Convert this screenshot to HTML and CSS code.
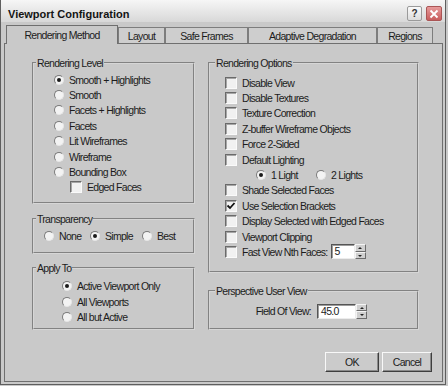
FILE: index.html
```html
<!DOCTYPE html>
<html>
<head>
<meta charset="utf-8">
<title>Viewport Configuration</title>
<link rel="stylesheet" href="styles.css">
</head>
<body>
<div class="window">
  <div class="titlebar">
    <span class="title">Viewport Configuration</span>
    <div class="caption-btns">
      <span class="cbtn help">?</span>
      <span class="cbtn close"><svg width="10" height="10" viewBox="0 0 10 10"><path d="M1.5 1.5L8.5 8.5M8.5 1.5L1.5 8.5" stroke="#fff" stroke-width="1.8" fill="none"/></svg></span>
    </div>
  </div>
  <div class="client">
    <div class="tabs">
      <div class="tab active w1">Rendering Method</div>
      <div class="tab w2">Layout</div>
      <div class="tab w3">Safe Frames</div>
      <div class="tab w4">Adaptive Degradation</div>
      <div class="tab w5">Regions</div>
    </div>
    <div class="panel">
      <div class="columns">
        <div class="col col-left">
          <fieldset class="group">
            <legend>Rendering Level</legend>
            <div class="gbody b-level">
              <div class="row"><span class="radio on"></span><span>Smooth + Highlights</span></div>
              <div class="row"><span class="radio"></span><span>Smooth</span></div>
              <div class="row"><span class="radio"></span><span>Facets + Highlights</span></div>
              <div class="row"><span class="radio"></span><span>Facets</span></div>
              <div class="row"><span class="radio"></span><span>Lit Wireframes</span></div>
              <div class="row"><span class="radio"></span><span>Wireframe</span></div>
              <div class="row"><span class="radio"></span><span>Bounding Box</span></div>
              <div class="row sub"><span class="check"></span><span>Edged Faces</span></div>
            </div>
          </fieldset>
          <fieldset class="group g-trans">
            <legend>Transparency</legend>
            <div class="gbody b-trans">
              <div class="opts opts-trans">
                <div class="row"><span class="radio"></span><span>None</span></div>
                <div class="row"><span class="radio on"></span><span>Simple</span></div>
                <div class="row"><span class="radio"></span><span>Best</span></div>
              </div>
            </div>
          </fieldset>
          <fieldset class="group g-apply">
            <legend>Apply To</legend>
            <div class="gbody b-apply">
              <div class="row"><span class="radio on"></span><span>Active Viewport Only</span></div>
              <div class="row"><span class="radio"></span><span>All Viewports</span></div>
              <div class="row"><span class="radio"></span><span>All but Active</span></div>
            </div>
          </fieldset>
        </div>
        <div class="col col-right">
          <fieldset class="group g-right">
            <legend>Rendering Options</legend>
            <div class="gbody b-opts">
              <div class="row"><span class="check"></span><span>Disable View</span></div>
              <div class="row"><span class="check"></span><span>Disable Textures</span></div>
              <div class="row"><span class="check"></span><span>Texture Correction</span></div>
              <div class="row"><span class="check"></span><span>Z-buffer Wireframe Objects</span></div>
              <div class="row"><span class="check"></span><span>Force 2-Sided</span></div>
              <div class="row"><span class="check"></span><span>Default Lighting</span></div>
              <div class="opts opts-light">
                <div class="row"><span class="radio on"></span><span>1 Light</span></div>
                <div class="row"><span class="radio"></span><span>2 Lights</span></div>
              </div>
              <div class="row"><span class="check"></span><span>Shade Selected Faces</span></div>
              <div class="row"><span class="check on"><svg width="10" height="10" viewBox="0 0 10 10"><path d="M1.5 4.5L4 7L8.5 2" stroke="#111" stroke-width="1.8" fill="none"/></svg></span><span>Use Selection Brackets</span></div>
              <div class="row"><span class="check"></span><span>Display Selected with Edged Faces</span></div>
              <div class="row"><span class="check"></span><span>Viewport Clipping</span></div>
              <div class="row"><span class="check"></span><span>Fast View Nth Faces:</span>
                <span class="spin spin-small"><span class="spin-input">5</span><span class="spin-arrows"><span class="arr"><i class="up"></i></span><span class="arr"><i class="down"></i></span></span></span>
              </div>
            </div>
          </fieldset>
          <fieldset class="group g-right g-persp">
            <legend>Perspective User View</legend>
            <div class="gbody b-persp">
              <div class="row fov"><span>Field Of View:</span>
                <span class="spin spin-wide"><span class="spin-input">45.0</span><span class="spin-arrows"><span class="arr"><i class="up"></i></span><span class="arr"><i class="down"></i></span></span></span>
              </div>
            </div>
          </fieldset>
        </div>
      </div>
      <div class="buttons">
        <span class="btn btn-ok">OK</span>
        <span class="btn btn-cancel">Cancel</span>
      </div>
    </div>
  </div>
</div>
</body>
</html>
```
FILE: styles.css
```css
* { box-sizing: border-box; }
body {
  margin: 0;
  background: #c9c9c9;
  font-family: "Liberation Sans", Arial, sans-serif;
  font-size: 10.5px;
  letter-spacing: -0.7px;
  color: #1c1c1c;
}
.window {
  width: 446px;
  height: 385px;
  border: 1px solid #5e5e5e;
  border-top: 0;
  display: flex;
  flex-direction: column;
  background: #c9c9c9;
}
.titlebar {
  height: 22px;
  flex: none;
  display: flex;
  align-items: center;
  justify-content: space-between;
  padding: 5px 3px 0 7px;
  background: linear-gradient(#f6f6f6, #d8d8d8);
}
.title {
  font-weight: bold;
  font-size: 11px;
  letter-spacing: 0;
  color: #141414;
}
.caption-btns { display: flex; gap: 4px; }
.cbtn {
  height: 15px;
  display: flex;
  align-items: center;
  justify-content: center;
  border-radius: 2px;
}
.help {
  width: 15px;
  background: linear-gradient(#fafafa, #dcdcdc);
  border: 1px solid #9a9a9a;
  font-weight: bold;
  font-size: 10px;
  letter-spacing: 0;
  color: #333;
}
.close {
  width: 16px;
  background: linear-gradient(#e79a9a, #c85c5c);
  border: 1px solid #a55;
}
.client {
  flex: 1;
  display: flex;
  flex-direction: column;
  padding: 0 2px 2px 3px;
}
.tabs {
  height: 21px;
  flex: none;
  display: flex;
  align-items: flex-end;
  padding-left: 2px;
}
.tab {
  height: 16px;
  flex: none;
  border: 1px solid #7d7d7d;
  border-bottom: 0;
  display: flex;
  align-items: center;
  justify-content: center;
  background: #cecece;
  white-space: nowrap;
}
.tab.active {
  height: 19px;
  margin-bottom: -1px;
  position: relative;
  z-index: 1;
  background: #c9c9c9;
  border-color: #6f6f6f;
}
.w1 { width: 112px; }
.w2 { width: 47px; }
.w3 { width: 83px; }
.w4 { width: 129px; }
.w5 { width: 56px; }
.panel {
  flex: 1;
  border: 1px solid #6f6f6f;
  display: flex;
  flex-direction: column;
  padding: 13px 10px 9px 27px;
}
.columns { display: flex; gap: 13px; }
.col { display: flex; flex-direction: column; }
.col-left { width: 163px; }
.col-right { width: 211px; }
.group {
  margin: 0;
  padding: 0;
  min-width: 0;
  border: 2px groove #d6d6d6;
}
.group legend {
  margin-left: 2px;
  padding: 0 1px;
  line-height: 12px;
  height: 12px;
}
.g-right legend { margin-left: 5px; }
.g-trans { margin-top: 9px; }
.g-apply { margin-top: 8px; }
.g-persp { margin-top: 12px; }
.b-level { padding: 3px 0 7px 20px; }
.b-trans { padding: 3px 0 8px 10px; }
.b-apply { padding: 5px 0 3px 28px; }
.b-opts { padding: 6px 0 11px 15px; }
.b-persp { padding: 7px 50px 9px 0; }
.row {
  height: 15.4px;
  display: flex;
  align-items: center;
  gap: 5px;
  white-space: nowrap;
}
.row.sub { padding-left: 16px; }
.opts { display: grid; }
.opts-trans { grid-template-columns: 46px 52px auto; }
.opts-light { grid-template-columns: 60px auto; padding-left: 31px; }
.radio {
  width: 10px;
  height: 10px;
  flex: none;
  border-radius: 50%;
  background: #f3f3f3;
  border: 1px solid;
  border-color: #7a7a7a #e6e6e6 #e6e6e6 #7a7a7a;
  display: flex;
  align-items: center;
  justify-content: center;
}
.radio.on::after {
  content: "";
  width: 4px;
  height: 4px;
  border-radius: 50%;
  background: #1a1a1a;
}
.check {
  width: 12px;
  height: 12px;
  flex: none;
  background: #f1f1f1;
  border: 1px solid;
  border-color: #6a6a6a #fafafa #fafafa #6a6a6a;
  box-shadow: inset 1px 1px 0 #a6a6a6;
  display: flex;
  align-items: center;
  justify-content: center;
}
.fov { justify-content: flex-end; gap: 6px; }
.spin { display: inline-flex; height: 15px; flex: none; }
.spin-small { margin-left: -2px; }
.spin-input {
  background: #fff;
  border: 1px solid;
  border-color: #555 #ececec #ececec #555;
  box-shadow: inset 1px 1px 0 #9c9c9c;
  padding-left: 3px;
  line-height: 13px;
}
.spin-small .spin-input { width: 24px; }
.spin-wide .spin-input { width: 39px; }
.spin-arrows {
  width: 11px;
  display: flex;
  flex-direction: column;
}
.arr {
  flex: 1;
  display: flex;
  align-items: center;
  justify-content: center;
  background: #d0d0d0;
  border: 1px solid;
  border-color: #f4f4f4 #6c6c6c #6c6c6c #f4f4f4;
}
.arr i { width: 0; height: 0; border-left: 2px solid transparent; border-right: 2px solid transparent; }
.arr .up { border-bottom: 2px solid #222; }
.arr .down { border-top: 2px solid #222; }
.buttons {
  margin-top: auto;
  display: flex;
  justify-content: flex-end;
  gap: 3px;
}
.btn {
  height: 20px;
  display: flex;
  align-items: center;
  justify-content: center;
  border: 1px solid;
  border-color: #f8f8f8 #3e3e3e #3e3e3e #f8f8f8;
  box-shadow: inset -1px -1px 0 #8a8a8a;
  background: #cbcbcb;
}
.btn-ok { width: 54px; }
.btn-cancel { width: 50px; }
```
